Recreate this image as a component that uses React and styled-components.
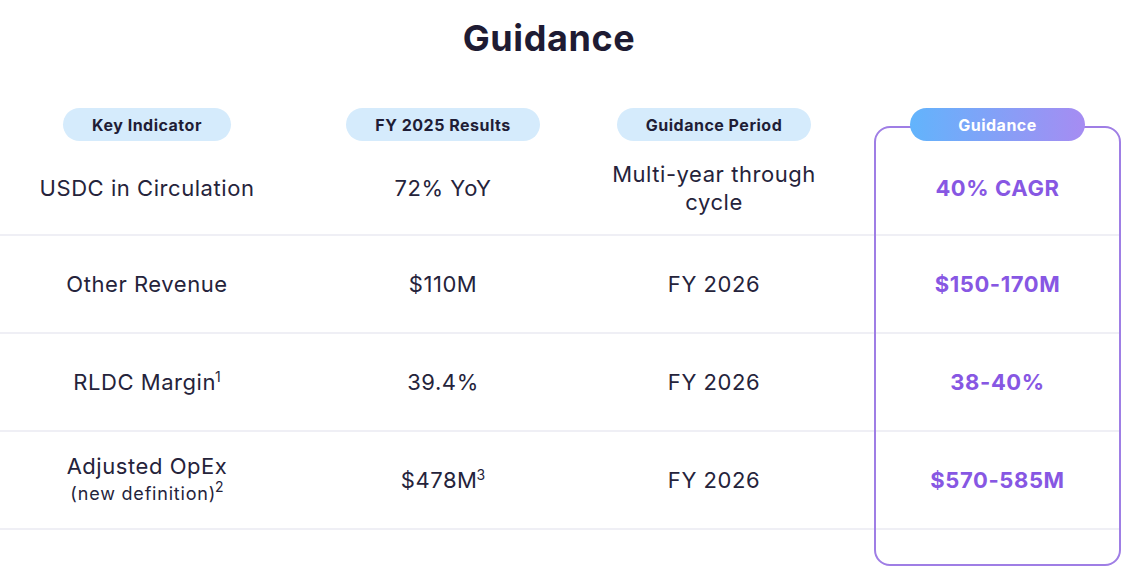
import React from "react";
import styled, { createGlobalStyle } from "styled-components";

const Global = createGlobalStyle`
  html, body { margin: 0; padding: 0; background: #ffffff; }
  body { font-family: "Inter", "Liberation Sans", sans-serif; color: #23213a; }
  * { box-sizing: border-box; }
`;

const Page = styled.div`
  position: relative;
  width: 1126px;
  height: 570px;
  overflow: hidden;
  background: #fff;
`;

const Title = styled.h1`
  margin: 0;
  height: 76px;
  display: flex;
  align-items: center;
  justify-content: center;
  padding-right: 28px;
  font-size: 36px;
  font-weight: 700;
  letter-spacing: 0.6px;
  color: #1e1b33;
`;

const cols = "294px 298px 282px 247px";

const HeaderRow = styled.div`
  display: grid;
  grid-template-columns: ${cols};
  margin-top: 32px;
  height: 33px;
`;

const HeaderCell = styled.div`
  display: flex;
  justify-content: center;
  padding-right: ${(p) => (p.$shift ? "38px" : "0")};
`;

const Pill = styled.div`
  position: relative;
  z-index: 2;
  height: 33px;
  display: inline-flex;
  align-items: center;
  justify-content: center;
  padding: 0 ${(p) => p.$pad || 29}px;
  border-radius: 17px;
  font-size: 16px;
  font-weight: 700;
  letter-spacing: 0.5px;
  white-space: nowrap;
  background: ${(p) =>
    p.$accent ? "linear-gradient(90deg, #62b4fc 0%, #a68cf2 100%)" : "#d5ebfc"};
  color: ${(p) => (p.$accent ? "#ffffff" : "#1f1d36")};
`;

const Row = styled.div`
  display: grid;
  grid-template-columns: ${cols};
  height: ${(p) => p.$h}px;
  border-bottom: 2px solid #efeff5;
  width: 1119px;
`;

const Cell = styled.div`
  display: flex;
  flex-direction: column;
  align-items: center;
  justify-content: center;
  text-align: center;
  font-size: 22px;
  font-weight: 400;
  line-height: 28px;
  letter-spacing: 0.55px;
  color: #25233b;
  padding-right: ${(p) => (p.$shift ? "38px" : "0")};
`;

const Value = styled(Cell)`
  font-weight: 700;
  font-size: 22px;
  color: #8757e3;
  letter-spacing: 0.6px;
  padding-right: 0;
`;

const Sub = styled.span`
  font-size: 18px;
  line-height: 28px;
  letter-spacing: 0.8px;
`;

const Sup = styled.sup`
  display: inline-block;
  font-size: 14px;
  line-height: 1;
  vertical-align: 8px;
  margin-left: -1px;
  letter-spacing: 0;
`;

const Highlight = styled.div`
  position: absolute;
  left: 874px;
  top: 126px;
  width: 247px;
  height: 440px;
  border: 2px solid #9f7ee5;
  border-radius: 16px;
  pointer-events: none;
  z-index: 1;
`;

const rows = [
  {
    h: 95,
    k: "USDC in Circulation",
    r: "72% YoY",
    p: (
      <>
        Multi-year through
        <br />
        cycle
      </>
    ),
    g: "40% CAGR",
  },
  { h: 98, k: "Other Revenue", r: "$110M", p: "FY 2026", g: "$150-170M" },
  {
    h: 98,
    k: (
      <span>
        RLDC Margin<Sup>1</Sup>
      </span>
    ),
    r: "39.4%",
    p: "FY 2026",
    g: "38-40%",
  },
  {
    h: 98,
    k: (
      <>
        <span>Adjusted OpEx</span>
        <Sub>
          (new definition)<Sup>2</Sup>
        </Sub>
      </>
    ),
    r: (
      <span>
        $478M<Sup>3</Sup>
      </span>
    ),
    p: "FY 2026",
    g: "$570-585M",
  },
];

export default function App() {
  return (
    <>
      <Global />
      <Page>
        <Title>Guidance</Title>
        <Highlight />
        <HeaderRow>
          <HeaderCell>
            <Pill>Key Indicator</Pill>
          </HeaderCell>
          <HeaderCell>
            <Pill>FY 2025 Results</Pill>
          </HeaderCell>
          <HeaderCell $shift>
            <Pill>Guidance Period</Pill>
          </HeaderCell>
          <HeaderCell>
            <Pill $accent $pad={48}>
              Guidance
            </Pill>
          </HeaderCell>
        </HeaderRow>
        {rows.map((row, i) => (
          <Row key={i} $h={row.h}>
            <Cell>{row.k}</Cell>
            <Cell>{row.r}</Cell>
            <Cell $shift>{row.p}</Cell>
            <Value>{row.g}</Value>
          </Row>
        ))}
      </Page>
    </>
  );
}
